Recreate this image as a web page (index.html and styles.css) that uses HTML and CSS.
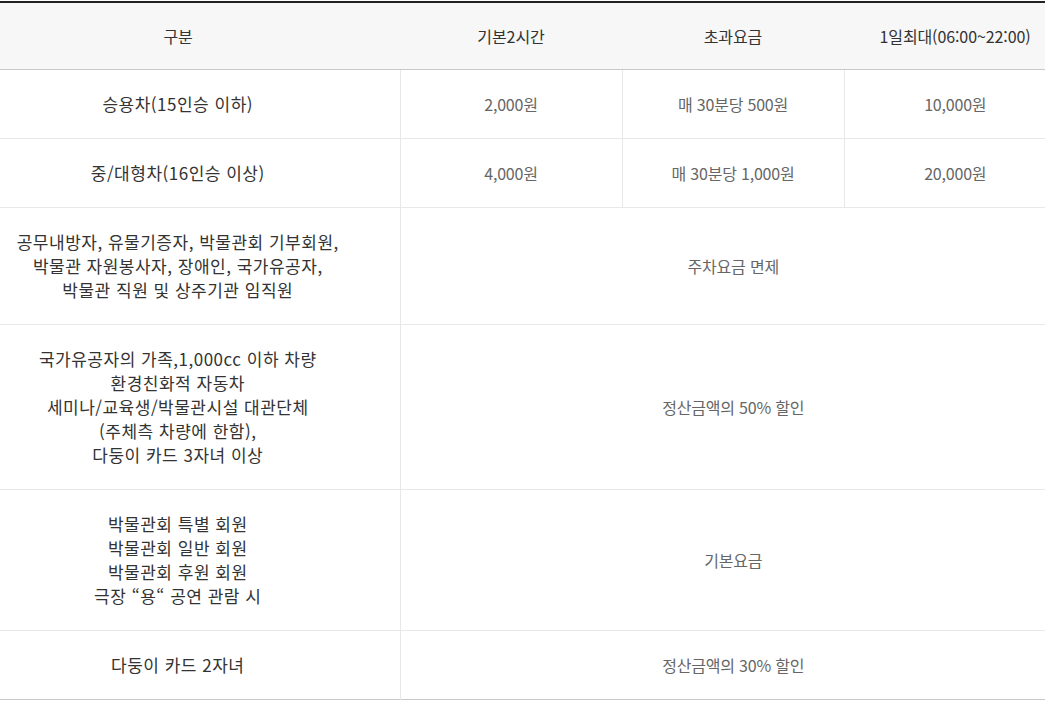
FILE: index.html
```html
<!DOCTYPE html>
<html lang="ko">
<head>
<meta charset="utf-8">
<link rel="stylesheet" href="styles.css">
</head>
<body>
<div class="wrap">
<table class="fee">
  <colgroup>
    <col class="c1"><col class="c2"><col class="c3"><col class="c4">
  </colgroup>
  <thead>
    <tr><th>구분</th><th>기본2시간</th><th>초과요금</th><th>1일최대(06:00~22:00)</th></tr>
  </thead>
  <tbody>
    <tr><td class="name">승용차(15인승 이하)</td><td>2,000원</td><td>매 30분당 500원</td><td>10,000원</td></tr>
    <tr><td class="name">중/대형차(16인승 이상)</td><td>4,000원</td><td>매 30분당 1,000원</td><td>20,000원</td></tr>
    <tr><td class="name">공무내방자, 유물기증자, 박물관회 기부회원,<br>박물관 자원봉사자, 장애인, 국가유공자,<br>박물관 직원 및 상주기관 임직원</td><td colspan="3">주차요금 면제</td></tr>
    <tr><td class="name">국가유공자의 가족,1,000cc 이하 차량<br>환경친화적 자동차<br>세미나/교육생/박물관시설 대관단체<br>(주체측 차량에 한함),<br>다둥이 카드 3자녀 이상</td><td colspan="3">정산금액의 50% 할인</td></tr>
    <tr><td class="name">박물관회 특별 회원<br>박물관회 일반 회원<br>박물관회 후원 회원<br>극장 “용“ 공연 관람 시</td><td colspan="3">기본요금</td></tr>
    <tr><td class="name">다둥이 카드 2자녀</td><td colspan="3">정산금액의 30% 할인</td></tr>
  </tbody>
</table>
</div>
</body>
</html>
```
FILE: styles.css
```css
html, body {
  margin: 0;
  padding: 0;
  background: #fff;
  overflow: hidden;
}
.wrap {
  padding-top: 1px;
  margin-left: -44px;
  width: 1110px;
}
.fee {
  width: 1110px;
  border-collapse: collapse;
  table-layout: fixed;
  border-top: 2px solid #222;
  border-bottom: 1px solid #c8c8c8;
  font-family: "Noto Sans CJK KR", "Noto Sans", sans-serif;
}
.c1 { width: 444px; }
.c2, .c3, .c4 { width: 222px; }
.fee th {
  background: #f7f7f7;
  height: 66px;
  padding: 0;
  font-weight: 400;
  font-size: 16px;
  color: #333;
  text-align: center;
  border-bottom: 1px solid #c8c8c8;
  letter-spacing: -0.1px;
}
.fee td {
  padding: 22px 0;
  line-height: 24px;
  text-align: center;
  font-size: 16px;
  color: #666;
  letter-spacing: -0.2px;
  border-bottom: 1px solid #e8e8e8;
  border-left: 1px solid #e8e8e8;
}
.fee td.name {
  border-left: none;
  font-size: 17px;
  color: #333;
  letter-spacing: 0.5px;
}
.fee tbody tr:last-child td {
  border-bottom: none;
}
```
